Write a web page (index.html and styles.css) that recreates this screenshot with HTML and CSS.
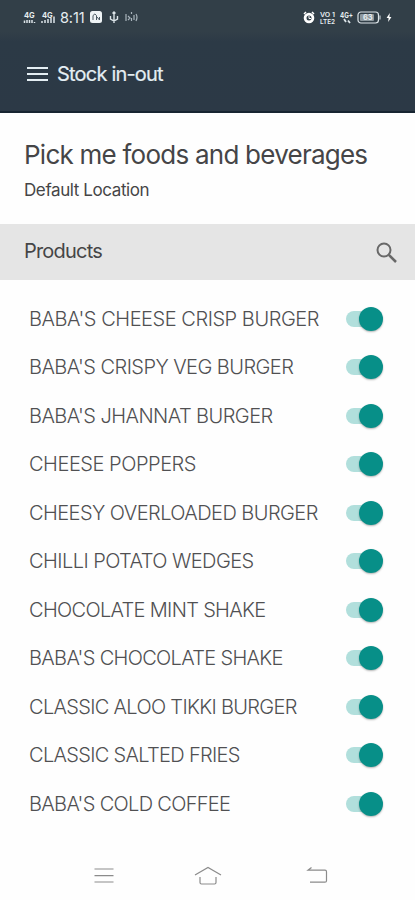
FILE: index.html
```html
<!DOCTYPE html>
<html lang="en">
<head>
<meta charset="utf-8">
<title>Stock in-out</title>
<link rel="stylesheet" href="styles.css">
</head>
<body>
<header class="top">
  <div class="status">
    <div class="status-left">
      <svg class="signal" viewBox="0 0 12 13"><text x="1" y="6.500">4G</text><path d="M1.500 12V9.500M4 12V9M6.500 12V9M9 12v-3M11.500 12v-1"/></svg>
      <svg class="signal second" viewBox="0 0 14 13"><text x="1" y="6.500">4G</text><path d="M1 12v-2M4 12V9M7 12V8M10 12V7M13 12V5.500"/></svg>
      <span class="clock">8:11</span>
      <svg class="badge" viewBox="0 0 12 12"><rect width="12" height="12" rx="2.500" fill="#eef3f5"/><path d="M3 9V4.500q2-3 3.500 0V9M7 6l2.500 3M9.500 6v3" fill="none" stroke="#4b5963"/></svg>
      <svg class="usb" viewBox="0 0 10 13"><path d="M5 1v11M1.500 5v3L5 10l3.500-2V5M3.500 2.500L5 1l1.500 1.500" fill="none" stroke="#dce4e8" stroke-width="1.400"/></svg>
      <svg class="cast" viewBox="0 0 13 12"><path d="M1 3v7M3 5l2 2-2 2M6.500 1v2M6.500 7v3M9 4v5M11 3q2 3 0 7" fill="none" stroke="#a9b5bd" stroke-width="1.200"/></svg>
    </div>
    <div class="status-right">
      <svg class="alarm" viewBox="0 0 12 13"><path d="M1 3l2-2M11 3L9 1" stroke="#fff" stroke-width="1.500"/><circle cx="6" cy="7" r="3.900" fill="none" stroke="#fff" stroke-width="2.800"/><path d="M6 5v2.500h2" fill="none" stroke="#fff"/></svg>
      <svg class="volte" viewBox="0 0 16 13"><text x="0" y="5.500" textLength="15" lengthAdjust="spacingAndGlyphs">VO 1</text><text x="0" y="12.500" textLength="15" lengthAdjust="spacingAndGlyphs">LTE2</text></svg>
      <svg class="four" viewBox="0 0 14 13"><text x="0" y="7" textLength="13" lengthAdjust="spacingAndGlyphs">4G+</text><path d="M4 8l2 3M8 9.500l2 2.500" stroke="#dce4e8" stroke-width="1.800"/></svg>
      <svg class="battery" viewBox="0 0 24 13"><rect x="1" y="1" width="20.500" height="11" rx="3" fill="none" stroke="#dce4e8" stroke-width="1.200"/><rect x="3" y="3" width="14" height="7" rx="1" fill="#8e999f"/><path d="M23 4.500v4" stroke="#dce4e8"/><text x="6" y="9.300">63</text></svg>
      <svg class="bolt" viewBox="0 0 6 11"><path d="M4 0L0 6h2.500L2 11l4-6H3.500z" fill="#fff"/></svg>
    </div>
  </div>
  <div class="appbar">
    <svg class="menu" viewBox="0 0 21 16"><path d="M0 2h21M0 8h21M0 14h21" stroke="#e4eef3" stroke-width="2"/></svg>
    <h1>Stock in-out</h1>
  </div>
</header>
<section class="store">
  <h2>Pick me foods and beverages</h2>
  <p>Default Location</p>
</section>
<section class="section-bar">
  <h3>Products</h3>
  <svg class="search" viewBox="0 0 22 22"><circle cx="8" cy="8" r="6.500" fill="none" stroke="#686868" stroke-width="2"/><path d="M12.800 12.800L20 20" stroke="#686868" stroke-width="2.500"/></svg>
</section>
<ul class="products">
  <li class="loose"><span>BABA'S CHEESE CRISP BURGER</span><i class="switch"></i></li>
  <li><span>BABA'S CRISPY VEG BURGER</span><i class="switch"></i></li>
  <li><span>BABA'S JHANNAT BURGER</span><i class="switch"></i></li>
  <li class="loose"><span>CHEESE POPPERS</span><i class="switch"></i></li>
  <li><span>CHEESY OVERLOADED BURGER</span><i class="switch"></i></li>
  <li><span>CHILLI POTATO WEDGES</span><i class="switch"></i></li>
  <li class="tight"><span>CHOCOLATE MINT SHAKE</span><i class="switch"></i></li>
  <li class="tight"><span>BABA'S CHOCOLATE SHAKE</span><i class="switch"></i></li>
  <li class="tight"><span>CLASSIC ALOO TIKKI BURGER</span><i class="switch"></i></li>
  <li class="tight"><span>CLASSIC SALTED FRIES</span><i class="switch"></i></li>
  <li class="tight"><span>BABA'S COLD COFFEE</span><i class="switch"></i></li>
</ul>
<nav class="sysnav">
  <svg viewBox="0 0 28 20"><path d="M4.500 3h19M4.500 9.700h19M4.500 16h19"/></svg>
  <svg viewBox="0 0 28 20"><path d="M1 9L14 1.500 27 9M6 11v5.500q0 1.500 1.500 1.500h13q1.500 0 1.500-1.500V11"/></svg>
  <svg viewBox="0 0 28 20"><path d="M8.500 1.500L5 4.200h17q1.500 0 1.500 1.500v9q0 1.500-1.500 1.500H7M5 4.200h5"/></svg>
</nav>
</body>
</html>
```
FILE: styles.css
```css
* { box-sizing: border-box; }
body {
  margin: 0;
  height: 900px;
  display: flex;
  flex-direction: column;
  background: #fefefe;
  color: #454547;
  font-family: Inter, Roboto, sans-serif;
  overflow: hidden;
}
h1, h2, h3, p, ul { margin: 0; padding: 0; font-weight: 400; }
svg { display: block; flex: none; overflow: visible; }
.top {
  height: 113px;
  background: linear-gradient(#323f48 0, #323f48 32px, #2c3a46 42px, #2c3946 100%);
  border-bottom: 2px solid #172532;
}
.status {
  height: 34px;
  padding: 0 23px;
  display: flex;
  justify-content: space-between;
  align-items: center;
}
.status-left, .status-right { display: flex; align-items: center; }
.status text { fill: #e6edf0; font-weight: 700; font-size: 7.5px; }
.status .volte text { font-size: 6px; font-weight: 600; }
.signal { width: 12px; height: 13px; }
.signal path { stroke: #dce4e8; stroke-width: 1.5; }
.second { width: 14px; margin-left: 6px; }
.clock { margin-left: 5px; width: 26px; font-size: 14.5px; letter-spacing: -0.1px; color: #e6edf0; white-space: nowrap; }
.badge { width: 12px; height: 12px; margin-left: 4px; }
.usb { width: 10px; height: 13px; margin-left: 7px; }
.cast { width: 13px; height: 12px; margin-left: 6px; }
.alarm { width: 12px; height: 13px; }
.volte { width: 16px; height: 13px; margin-left: 5px; }
.four { width: 14px; height: 13px; margin-left: 4px; }
.battery { width: 24px; height: 13px; margin-left: 3px; }
.bolt { width: 6px; height: 9px; margin-left: 5px; }
.appbar {
  height: 79px;
  padding-left: 27px;
  display: flex;
  align-items: center;
}
.menu { width: 21px; height: 16px; }
h1 { margin-left: 9px; font-size: 20px; letter-spacing: -0.8px; color: #e4eef3; -webkit-text-stroke: 0.2px #e4eef3; }
.store { height: 111px; padding: 26px 24px 0; }
h2 { font-size: 26px; line-height: 32px; letter-spacing: -0.76px; white-space: nowrap; }
.store p { margin-top: 8px; font-size: 17px; line-height: 22px; letter-spacing: -0.4px; }
.section-bar {
  height: 56px;
  padding: 0 17px 2px 24px;
  display: flex;
  align-items: center;
  justify-content: space-between;
  background: #e5e5e5;
}
h3 { font-size: 20px; letter-spacing: -0.8px; }
.search { width: 22px; height: 22px; margin-top: 3px; }
.products { padding: 14.5px 32px 0 29px; list-style: none; }
.products li {
  height: 48.5px;
  display: flex;
  align-items: center;
  justify-content: space-between;
  font-size: 20px;
  font-weight: 300;
  letter-spacing: -0.56px;
  color: #505052;
  white-space: nowrap;
}
.products .loose { letter-spacing: -0.46px; }
.products .tight { letter-spacing: -0.68px; }
.switch {
  width: 37px;
  height: 24px;
  display: flex;
  align-items: center;
  flex: none;
}
.switch::before {
  content: "";
  width: 30px;
  height: 16px;
  border-radius: 8px;
  background: #b1dfdc;
}
.switch::after {
  content: "";
  width: 24px;
  height: 24px;
  margin-left: -17px;
  border-radius: 50%;
  background: #078f88;
  box-shadow: 0 1px 2px rgba(0, 0, 0, .3);
}
.sysnav {
  margin-top: auto;
  height: 48px;
  padding: 0 84px 0 90px;
  display: flex;
  align-items: center;
  justify-content: space-between;
}
.sysnav svg { width: 28px; height: 20px; fill: none; stroke: #8b8b8b; stroke-width: 1.2; }
.sysnav svg:nth-child(2) { margin-left: -6px; }
```
